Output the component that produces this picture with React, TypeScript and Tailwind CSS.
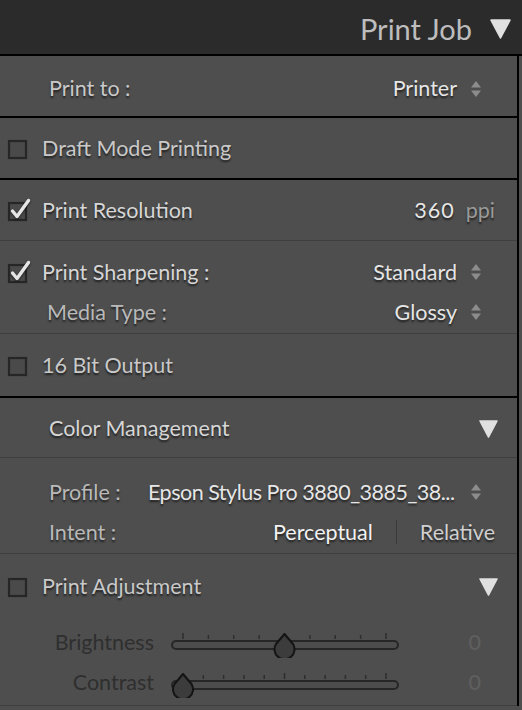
import React from 'react';

const shadow = '[text-shadow:0_2px_2px_rgba(0,0,0,0.6)]';

function Checkbox({ checked }: { checked?: boolean }) {
  return (
    <svg width="34" height="28" viewBox="0 0 34 28" className="shrink-0">
      <rect x="9" y="7" width="17" height="17" fill="#4a4a4a" stroke="#262626" strokeWidth="2.2" />
      {checked && (
        <path
          d="M12.5 15 L17 20.5 L28.5 4.5"
          fill="none"
          stroke="#e6e6e6"
          strokeWidth="3.4"
          strokeLinecap="round"
          strokeLinejoin="round"
          style={{ filter: 'drop-shadow(0 1px 1px rgba(0,0,0,0.6))' }}
        />
      )}
    </svg>
  );
}

function UpDown() {
  return (
    <svg width="12" height="18" viewBox="0 0 12 18" className="shrink-0">
      <path d="M6 1 L11 7.5 L1 7.5 Z" fill="#8c8c8c" />
      <path d="M6 17 L11 10.5 L1 10.5 Z" fill="#8c8c8c" />
    </svg>
  );
}

function Triangle({ size = 18 }: { size?: number }) {
  return (
    <svg width={size} height={size} viewBox="0 0 20 20" className="shrink-0">
      <path d="M1 2 L19 2 L10 19 Z" fill="#e0e0e0" stroke="#e0e0e0" strokeWidth="1.5" strokeLinejoin="round" />
    </svg>
  );
}

function Slider({ ticks, pos }: { ticks: number; pos: number }) {
  const w = 228;
  const x0 = 12;
  const x1 = 215;
  const thumbX = x0 + (x1 - x0) * pos;
  return (
    <svg width={w} height="32" viewBox={`0 0 ${w} 32`} className="shrink-0">
      {Array.from({ length: ticks }).map((_, i) => {
        const x = x0 + ((x1 - x0) * i) / (ticks - 1);
        const big = i === 0 || i === ticks - 1 || i === (ticks - 1) / 2;
        return <line key={i} x1={x} x2={x} y1={big ? 7 : 9} y2={13} stroke="#2e2e2e" strokeWidth="1.5" />;
      })}
      <rect x="1" y="15" width={w - 2} height="8" rx="4" fill="#4c4c4c" stroke="#262626" strokeWidth="2" />
      <path
        d={`M${thumbX} 8 L${thumbX + 8.5} 18 A10 10 0 1 1 ${thumbX - 8.5} 18 Z`}
        fill="#3c3c3c"
        stroke="#141414"
        strokeWidth="2"
        strokeLinejoin="round"
      />
    </svg>
  );
}

export default function App() {
  return (
    <div
      className="w-[522px] h-[710px] overflow-hidden bg-[#4e4e4e] text-[21.5px] text-[#c9c9c9]"
      style={{ fontFamily: 'Lato, "Open Sans", sans-serif' }}
    >
      {/* panel header */}
      <div className="h-[54px] bg-[#2b2b2b] flex items-center justify-end pt-[3px] pr-[11px] gap-[18px]">
        <span className="text-[29px] text-[#bdbdbd]">Print Job</span>
        <Triangle size={21} />
      </div>

      <div className="flex">
        <div className="w-[519px] border-t-2 border-r-2 border-black">
          {/* Print to */}
          <div className="h-[62px] border-b-2 border-black flex items-center pt-[5px] pl-[49px] pr-[35px]">
            <span className={`flex-1 ${shadow}`}>Print to :</span>
            <span className={`text-[#e6e6e6] mr-[13px] ${shadow}`}>Printer</span>
            <UpDown />
          </div>

          {/* Draft */}
          <div className="h-[62px] border-b-2 border-black flex items-center">
            <Checkbox />
            <span className={`ml-[8px] ${shadow}`}>Draft Mode Printing</span>
          </div>

          {/* Print Resolution */}
          <div className="h-[61px] border-b border-[#3e3e3e] flex items-center pr-[22px]">
            <Checkbox checked />
            <span className={`ml-[8px] flex-1 text-[#d6d6d6] ${shadow}`}>Print Resolution</span>
            <span className={`text-[#e6e6e6] tracking-[1px] ${shadow}`}>360</span>
            <span className={`ml-[11px] text-[#9a9a9a] ${shadow}`}>ppi</span>
          </div>

          {/* Sharpening */}
          <div className="h-[93px] border-b border-[#3e3e3e] pt-[13px] pr-[35px] flex flex-col gap-[4px]">
            <div className="h-9 flex items-center">
              <Checkbox checked />
              <span className={`ml-[8px] flex-1 text-[#d6d6d6] ${shadow}`}>Print Sharpening :</span>
              <span className={`text-[#e6e6e6] mr-[13px] ${shadow}`}>Standard</span>
              <UpDown />
            </div>
            <div className="h-9 flex items-center pl-[47px]">
              <span className={`flex-1 text-[#b9b9b9] ${shadow}`}>Media Type :</span>
              <span className={`text-[#e6e6e6] mr-[13px] ${shadow}`}>Glossy</span>
              <UpDown />
            </div>
          </div>

          {/* 16 bit */}
          <div className="h-[64px] border-b-2 border-black flex items-center">
            <Checkbox />
            <span className={`ml-[8px] ${shadow}`}>16 Bit Output</span>
          </div>

          {/* Color Management */}
          <div className="h-[60px] border-b border-[#3e3e3e] flex items-center pt-[2px] pl-[49px] pr-[19px]">
            <span className={`flex-1 text-[#d6d6d6] ${shadow}`}>Color Management</span>
            <Triangle size={19} />
          </div>

          {/* Profile / Intent */}
          <div className="h-[96px] border-b border-[#3e3e3e] pt-[16px] pl-[49px] pr-[22px] flex flex-col gap-[4px]">
            <div className="h-9 flex items-center">
              <span className={`w-[99px] text-[#b9b9b9] ${shadow}`}>Profile :</span>
              <span className={`flex-1 text-[#e6e6e6] whitespace-nowrap tracking-[-0.5px] ${shadow}`}>
                Epson Stylus Pro 3880_3885_38...
              </span>
              <span className="mr-[13px]">
                <UpDown />
              </span>
            </div>
            <div className="h-9 flex items-center">
              <span className={`flex-1 text-[#b9b9b9] ${shadow}`}>Intent :</span>
              <span className={`text-[#f2f2f2] ${shadow}`}>Perceptual</span>
              <span className="mx-[23px] w-px h-[24px] bg-[#3a3a3a]" />
              <span className={`text-[#cfcfcf] ${shadow}`}>Relative</span>
            </div>
          </div>

          {/* Print Adjustment */}
          <div className="h-[152px] border-b border-[#3e3e3e] flex flex-col pr-[19px]">
            <div className="h-[64px] flex items-center">
              <Checkbox />
              <span className={`ml-[8px] flex-1 ${shadow}`}>Print Adjustment</span>
              <Triangle size={19} />
            </div>
            <div className="pt-[4px] flex flex-col">
              <div className="h-[40px] flex items-center">
                <span className="w-[154px] text-right text-[#2f2f2f]">Brightness</span>
                <span className="ml-[17px]">
                  <Slider ticks={9} pos={0.5} />
                </span>
                <span className="ml-auto mr-[17px] text-[#5f5f5f]">0</span>
              </div>
              <div className="h-[40px] flex items-center">
                <span className="w-[154px] text-right text-[#2f2f2f]">Contrast</span>
                <span className="ml-[17px]">
                  <Slider ticks={11} pos={0} />
                </span>
                <span className="ml-auto mr-[17px] text-[#5f5f5f]">0</span>
              </div>
            </div>
          </div>
        </div>
        <div className="flex-1 border-t-2 border-black" />
      </div>
    </div>
  );
}
